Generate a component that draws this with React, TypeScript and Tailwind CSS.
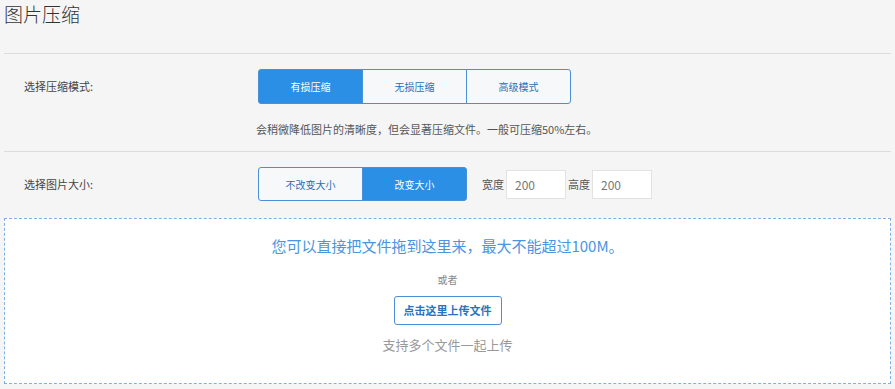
import React, { useState } from 'react';

const font = "font-['Noto_Sans_CJK_SC','Noto_Sans',sans-serif]";

const modes = ['有损压缩', '无损压缩', '高级模式'];
const sizes = ['不改变大小', '改变大小'];

const App: React.FC = () => {
  const [mode, setMode] = useState(0);
  const [size, setSize] = useState(1);

  return (
    <div className={`min-h-[389px] w-[895px] bg-[#f5f5f5] px-[4px] text-[#333] ${font}`}>
      {/* Title */}
      <h1 className="h-[53px] pt-[1px] text-[19px] font-light leading-[26px] text-[#333]">图片压缩</h1>

      {/* Compression mode */}
      <div className="border-t border-[#dcdcdc] pt-[15px] pb-[12px]">
        <div className="flex items-center">
          <div className="w-[254px] pl-[20px] text-[11px] text-[#444]">选择压缩模式:</div>
          <div className="flex">
            {modes.map((m, i) => (
              <button
                key={m}
                onClick={() => setMode(i)}
                className={`h-[35px] w-[105px] border border-[#4a90d9] text-[10px] ${
                  i === 0 ? 'rounded-l-[3px]' : '-ml-px'
                } ${i === modes.length - 1 ? 'rounded-r-[3px]' : ''} ${
                  mode === i ? 'bg-[#2b8fe6] text-white border-[#2b8fe6]' : 'bg-[#f7f8fa] text-[#2a6fb8]'
                }`}
              >
                {m}
              </button>
            ))}
          </div>
        </div>
        <p className="mt-[15px] pl-[252px] text-[11px] leading-[20px] text-[#555]">
          会稍微降低图片的清晰度，但会显著压缩文件。一般可压缩50%左右。
        </p>
      </div>

      {/* Image size */}
      <div className="border-t border-[#dcdcdc] pt-[15px] pb-[17px]">
        <div className="flex items-center">
          <div className="w-[254px] pl-[20px] text-[11px] text-[#444]">选择图片大小:</div>
          <div className="flex">
            {sizes.map((s, i) => (
              <button
                key={s}
                onClick={() => setSize(i)}
                className={`h-[34px] w-[105px] border border-[#4a90d9] text-[10px] ${
                  i === 0 ? 'rounded-l-[3px]' : '-ml-px rounded-r-[3px]'
                } ${size === i ? 'bg-[#2b8fe6] text-white border-[#2b8fe6]' : 'bg-[#f7f8fa] text-[#2a6fb8]'}`}
              >
                {s}
              </button>
            ))}
          </div>
          <span className="ml-[15px] text-[11px] text-[#555]">宽度</span>
          <input
            defaultValue="200"
            className="ml-[2px] h-[29px] w-[60px] border border-[#e2e2e2] bg-white px-[8px] text-[12px] text-[#777] outline-none"
          />
          <span className="ml-[2px] text-[11px] text-[#555]">高度</span>
          <input
            defaultValue="200"
            className="ml-[2px] h-[29px] w-[60px] border border-[#e2e2e2] bg-white px-[8px] text-[12px] text-[#777] outline-none"
          />
        </div>
      </div>

      {/* Drop zone */}
      <div className="flex h-[166px] flex-col items-center border border-dashed border-[#7fb1e0] bg-white pt-[15px]">
        <p className="text-[15px] leading-[24px] text-[#4a94e0]">您可以直接把文件拖到这里来，最大不能超过100M。</p>
        <p className="mt-[14px] text-[10px] leading-[16px] text-[#888]">或者</p>
        <button className="mt-[8px] h-[29px] w-[108px] rounded-[3px] border border-[#4a90d9] bg-white text-[11px] font-bold text-[#2a72c0]">
          点击这里上传文件
        </button>
        <p className="mt-[10px] text-[13px] leading-[20px] text-[#999]">支持多个文件一起上传</p>
      </div>
    </div>
  );
};

export default App;
